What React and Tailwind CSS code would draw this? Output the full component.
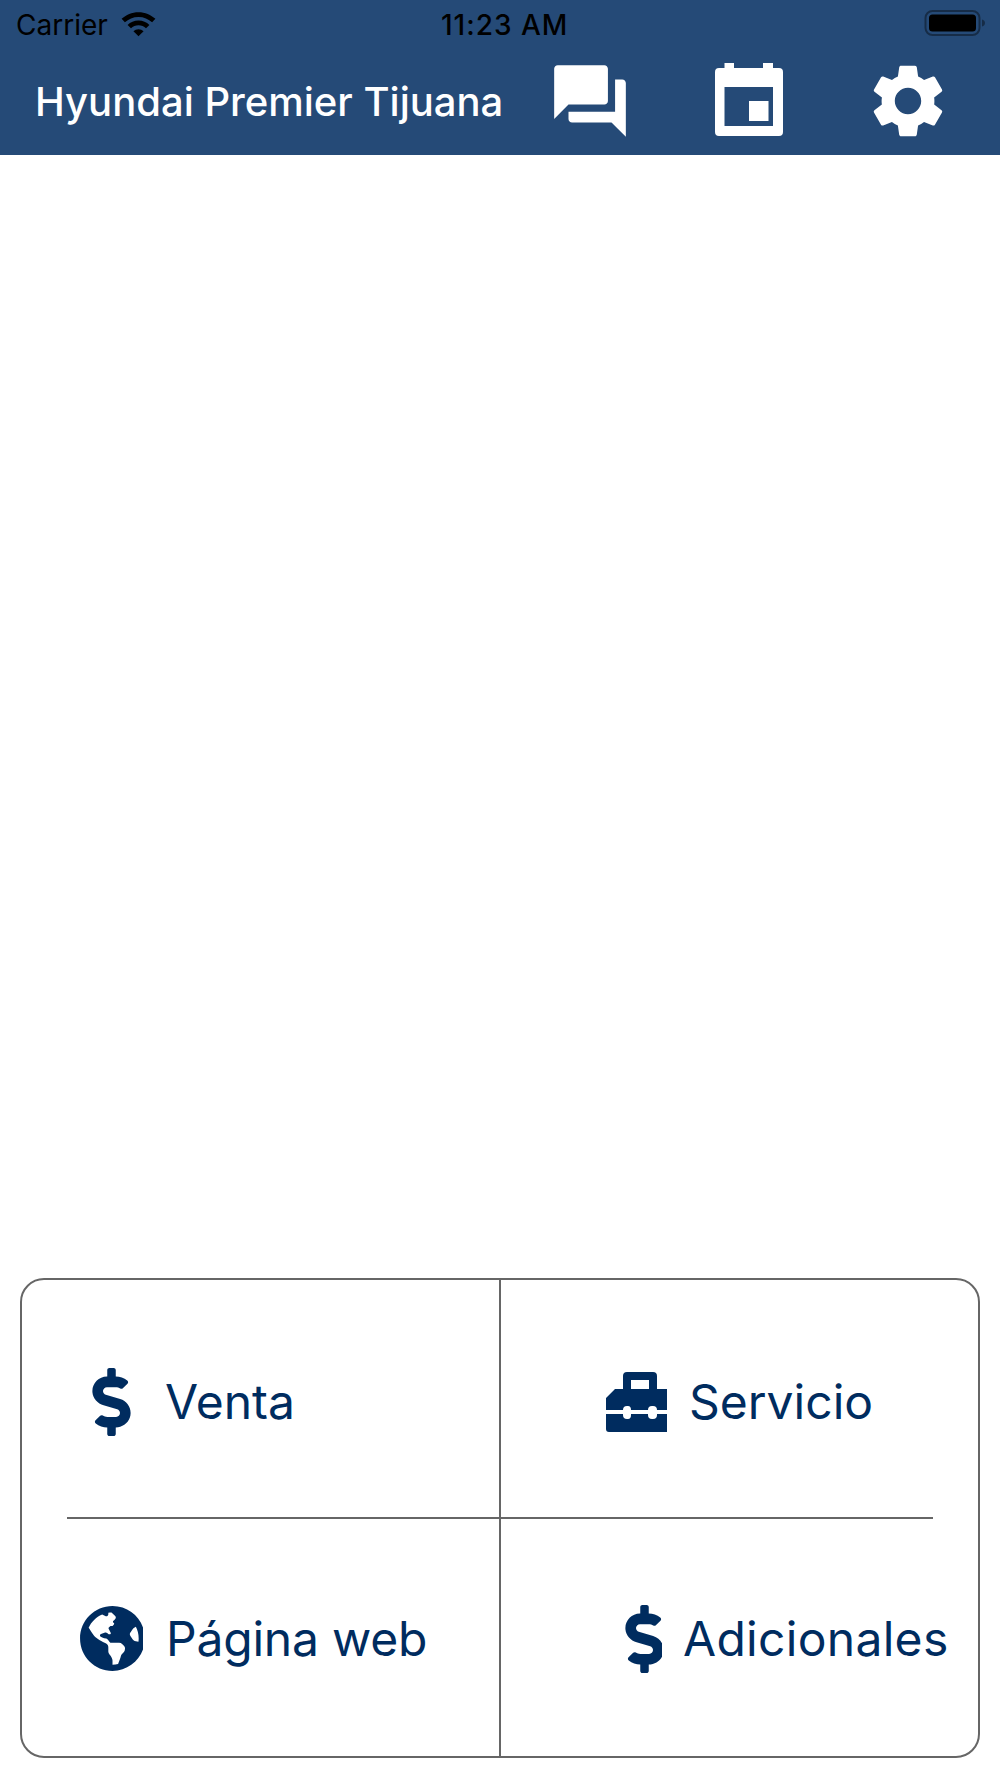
import React from 'react';
import { FaDollarSign, FaGlobeAmericas } from 'react-icons/fa';
import { MdQuestionAnswer, MdSettings } from 'react-icons/md';

const StatusBar = () => (
    <div className="relative h-[46px] flex items-center pt-[4px] pl-4 pr-[14px] text-black text-[28px] leading-none">
        <span>Carrier</span>
        <svg className="ml-[13px] -mt-[2px] w-[35px] h-[25px]" viewBox="0 0 34 24" fill="#000">
            <path d="M17 0C10.6 0 4.9 2.5.6 6.5l3.2 3.3C7.2 6.6 11.9 4.6 17 4.6s9.8 2 13.2 5.2l3.2-3.3C29.1 2.5 23.4 0 17 0z" />
            <path d="M17 8.2c-4.1 0-7.9 1.6-10.6 4.2l3.3 3.3c1.9-1.8 4.5-2.9 7.3-2.9s5.4 1.1 7.3 2.9l3.3-3.3C24.900 9.800 21.100 8.200 17 8.200z" />
            <path d="M17 16.600c-1.900 0-3.600.7-4.900 1.900L17 23.500l4.900-5c-1.300-1.200-3-1.900-4.900-1.900z" />
        </svg>
        <span className="absolute left-[441px] font-medium tracking-[1px]">11:23 AM</span>
        <svg className="ml-auto -mt-[4px] w-[62px] h-[28px]" viewBox="0 0 62 28">
            <rect x="1.500" y="2" width="54" height="24" rx="7" fill="none" stroke="#000" strokeOpacity="0.4" strokeWidth="2" />
            <rect x="5" y="5.500" width="47" height="17" rx="3.500" fill="#000" />
            <path d="M58 10.500c1.800.5 3 1.800 3 3.500s-1.200 3-3 3.500z" fill="#000" fillOpacity="0.4" />
        </svg>
    </div>
);

const CalendarIcon = () => (
    <svg className="w-[68px] h-[73px] ml-[11px] mr-[9px] -mt-[2px]" viewBox="0 0 68 73" fill="currentColor">
        <path fillRule="evenodd" d="M9.500 0H19v5h29V0h10v5h6q4 0 4 4v60q0 4-4 4H4q-4 0-4-4V9q0-4 4-4h5.500V0zm0 24v39H58V24H9.500z" />
        <rect x="34" y="38" width="19.500" height="20" />
    </svg>
);

const Toolbox = () => (
    <svg className="w-[61px] h-[60px] shrink-0" viewBox="0 0 61 60" fill="#002c5f">
        <path fillRule="evenodd" d="M17 17V4q0-4 4-4h26q4 0 4 4v13h10v21H0V26l9-9h8zM25 8v9h18V8H25z" />
        <path d="M0 42h17v1q0 4 4 4h1q3 0 3-4v-1h17v1q0 4 4 4h1q4 0 4-4v-1h10v18H3q-3 0-3-3V42z" />
        <path d="M21 34h1q3 0 3 4v4h-8v-4q0-4 4-4zM46 34h1q4 0 4 4v4h-9v-4q0-4 4-4z" fill="#fff" />
    </svg>
);

const MenuItem = ({ icon, label, className, labelClass }) => (
    <div className={`flex items-center ${className}`}>
        {icon}
        <span className={`text-[48px] leading-none text-[#002c5f] whitespace-nowrap ${labelClass}`}>{label}</span>
    </div>
);

export default function App() {
    return (
        <div className="h-screen bg-white flex flex-col font-['Inter',sans-serif]">
            <header className="h-[155px] bg-[#254a77]">
                <StatusBar />
                <div className="h-[109px] flex items-center pl-[35px] pr-[48px] text-white">
                    <h1 className="mt-[2px] text-[40px] font-medium leading-none whitespace-nowrap">Hyundai Premier Tijuana</h1>
                    <div className="ml-auto flex items-center gap-[72px]">
                        <MdQuestionAnswer className="w-[86px] h-[86px] -mr-px" />
                        <CalendarIcon />
                        <MdSettings className="w-[88px] h-[88px]" />
                    </div>
                </div>
            </header>

            <main className="flex-1" />

            {/* Menu box */}
            <div className="mx-5 mb-5 h-[480px] border-2 border-[#666666] rounded-[24px] grid grid-cols-[479px_1fr] grid-rows-[239px_1fr]">
                <MenuItem
                    className="ml-[45px] pl-[25px] pt-[6px] border-b-2 border-r-2 border-[#666666]"
                    labelClass="ml-[34px]"
                    icon={<FaDollarSign className="w-[39px] h-[68px] shrink-0 text-[#002c5f]" />}
                    label="Venta"
                />
                <MenuItem
                    className="mr-[45px] pl-[105px] pt-[6px] border-b-2 border-[#666666]"
                    labelClass="ml-[22px]"
                    icon={<Toolbox />}
                    label="Servicio"
                />
                <MenuItem
                    className="pl-[57px] pt-[2px] border-r-2 border-[#666666]"
                    labelClass="ml-[23px] tracking-[-0.2px]"
                    icon={
                        <div className="w-[64px] h-[67px] overflow-hidden shrink-0">
                            <FaGlobeAmericas className="w-[67px] h-[67px] text-[#002c5f]" />
                        </div>
                    }
                    label="Página web"
                />
                <MenuItem
                    className="pl-[124px] pt-[2px]"
                    labelClass="ml-[21px] tracking-[0.3px]"
                    icon={
                        <div className="w-[37px] h-[68px] overflow-hidden shrink-0">
                            <FaDollarSign className="w-[39px] h-[68px] text-[#002c5f]" />
                        </div>
                    }
                    label="Adicionales"
                />
            </div>
        </div>
    );
}
